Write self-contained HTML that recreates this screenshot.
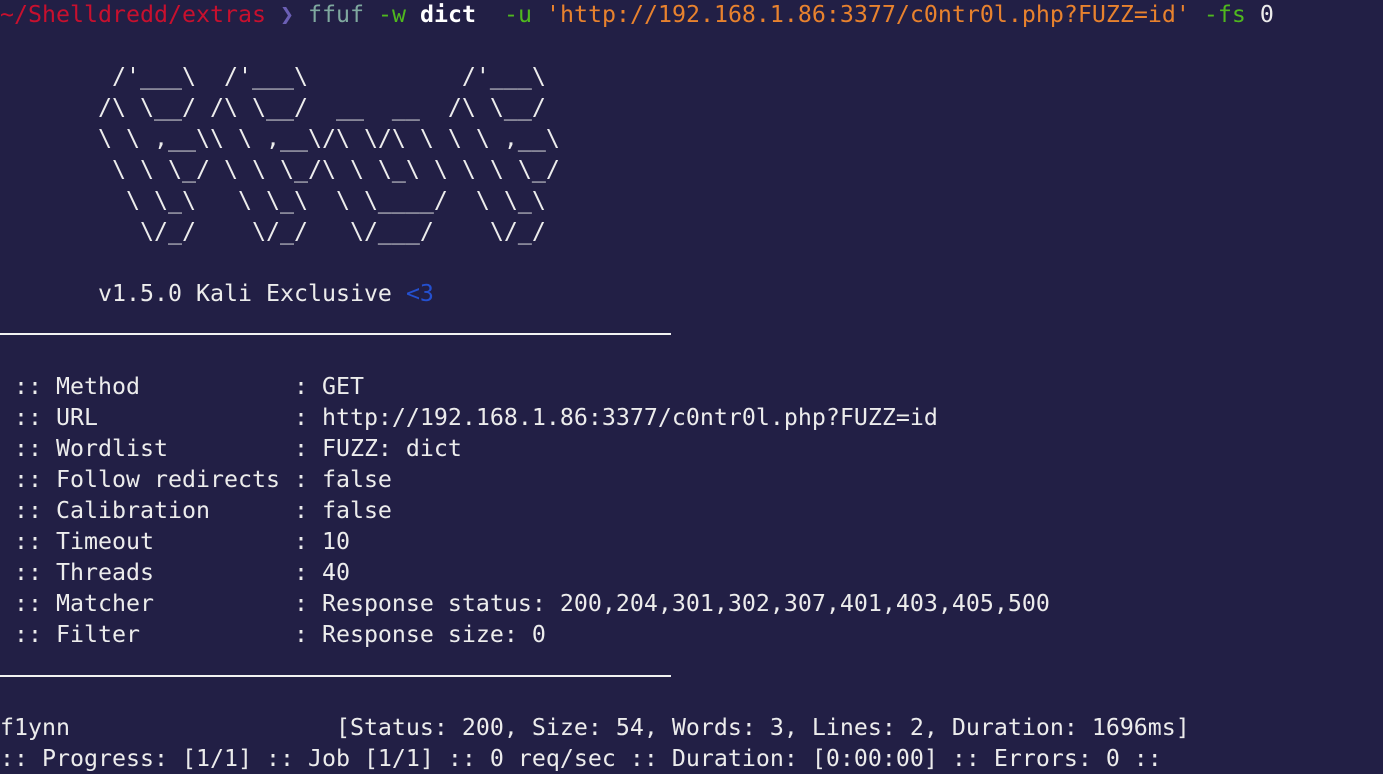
<!DOCTYPE html>
<html><head><meta charset="utf-8"><style>
html,body{margin:0;padding:0;background:#221f45;width:1383px;height:748px;overflow:hidden}
pre{margin:0;position:absolute;left:0;top:-1px;font-family:"DejaVu Sans Mono","Liberation Mono",monospace;font-size:23.25px;line-height:31px;color:#ececec;white-space:pre}
.r{color:#c8102e}.p{color:#6b5fb5}.t{color:#7fa89f}.g{color:#4fb81e}.b{font-weight:bold;color:#fff}.o{color:#e8822e}.bl{color:#2450d0}
.sep{position:absolute;left:0;width:671px;height:2px;background:#f2f2f2}
</style></head><body>
<pre><span class="r">~/Shelldredd/extras</span> <span class="p">❯</span> <span class="t">ffuf</span> <span class="g">-w</span> <span class="b">dict</span>  <span class="g">-u</span> <span class="o">'http://192.168.1.86:3377/c0ntr0l.php?FUZZ=id'</span> <span class="g">-fs</span> 0

        /'___\  /'___\           /'___\
       /\ \__/ /\ \__/  __  __  /\ \__/
       \ \ ,__\\ \ ,__\/\ \/\ \ \ \ ,__\
        \ \ \_/ \ \ \_/\ \ \_\ \ \ \ \_/
         \ \_\   \ \_\  \ \____/  \ \_\
          \/_/    \/_/   \/___/    \/_/

       v1.5.0 Kali Exclusive <span class="bl">&lt;3</span>


 :: Method           : GET
 :: URL              : http://192.168.1.86:3377/c0ntr0l.php?FUZZ=id
 :: Wordlist         : FUZZ: dict
 :: Follow redirects : false
 :: Calibration      : false
 :: Timeout          : 10
 :: Threads          : 40
 :: Matcher          : Response status: 200,204,301,302,307,401,403,405,500
 :: Filter           : Response size: 0


f1ynn                   [Status: 200, Size: 54, Words: 3, Lines: 2, Duration: 1696ms]
:: Progress: [1/1] :: Job [1/1] :: 0 req/sec :: Duration: [0:00:00] :: Errors: 0 ::</pre>
<div class="sep" style="top:333px"></div>
<div class="sep" style="top:675px"></div>
</body></html>
